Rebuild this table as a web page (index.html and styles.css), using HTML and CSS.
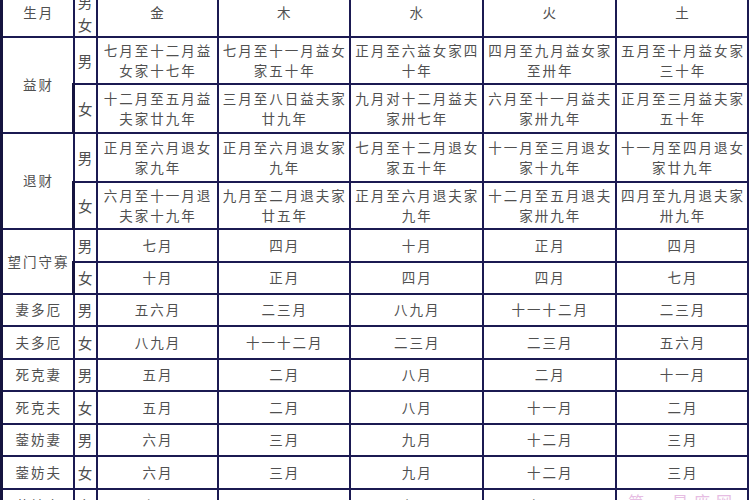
FILE: index.html
```html
<!DOCTYPE html>
<html lang="zh">
<head>
<meta charset="utf-8">
<link rel="stylesheet" href="styles.css">
</head>
<body>
<table class="chart">
  <colgroup>
    <col class="c-name"><col class="c-sex"><col class="c-el1"><col class="c-el2"><col class="c-el3"><col class="c-el4"><col class="c-el5">
  </colgroup>
  <tr class="r-head">
    <td>生月</td><td class="sex-head">男<br>女</td><td>金</td><td>木</td><td>水</td><td>火</td><td>土</td>
  </tr>
  <tr class="r-a">
    <td rowspan="2">益财</td><td class="sex">男</td>
    <td>七月至十二月益<br>女家十七年</td><td>七月至十一月益女<br>家五十年</td><td>正月至六益女家四<br>十年</td><td>四月至九月益女家<br>至卅年</td><td>五月至十月益女家<br>三十年</td>
  </tr>
  <tr class="r-b">
    <td class="sex">女</td>
    <td>十二月至五月益<br>夫家廿九年</td><td>三月至八日益夫家<br>廿九年</td><td>九月对十二月益夫<br>家卅七年</td><td>六月至十一月益夫<br>家卅九年</td><td>正月至三月益夫家<br>五十年</td>
  </tr>
  <tr class="r-b">
    <td rowspan="2">退财</td><td class="sex">男</td>
    <td>正月至六月退女<br>家九年</td><td>正月至六月退女家<br>九年</td><td>七月至十二月退女<br>家五十年</td><td>十一月至三月退女<br>家十九年</td><td>十一月至四月退女<br>家廿九年</td>
  </tr>
  <tr class="r-c">
    <td class="sex">女</td>
    <td>六月至十一月退<br>夫家十九年</td><td>九月至二月退夫家<br>廿五年</td><td>正月至六月退夫家<br>九年</td><td>十二月至五月退夫<br>家卅九年</td><td>四月至九月退夫家<br>卅九年</td>
  </tr>
  <tr class="r-s1">
    <td rowspan="2">望门守寡</td><td class="sex">男</td>
    <td>七月</td><td>四月</td><td>十月</td><td>正月</td><td>四月</td>
  </tr>
  <tr class="r-s2">
    <td class="sex">女</td>
    <td>十月</td><td>正月</td><td>四月</td><td>四月</td><td>七月</td>
  </tr>
  <tr class="r-s2">
    <td>妻多厄</td><td class="sex">男</td>
    <td>五六月</td><td>二三月</td><td>八九月</td><td>十一十二月</td><td>二三月</td>
  </tr>
  <tr class="r-s1">
    <td>夫多厄</td><td class="sex">女</td>
    <td>八九月</td><td>十一十二月</td><td>二三月</td><td>二三月</td><td>五六月</td>
  </tr>
  <tr class="r-s2">
    <td>死克妻</td><td class="sex">男</td>
    <td>五月</td><td>二月</td><td>八月</td><td>二月</td><td>十一月</td>
  </tr>
  <tr class="r-s1">
    <td>死克夫</td><td class="sex">女</td>
    <td>五月</td><td>二月</td><td>八月</td><td>十一月</td><td>二月</td>
  </tr>
  <tr class="r-s2">
    <td>蓥妨妻</td><td class="sex">男</td>
    <td>六月</td><td>三月</td><td>九月</td><td>十二月</td><td>三月</td>
  </tr>
  <tr class="r-s1">
    <td>蓥妨夫</td><td class="sex">女</td>
    <td>六月</td><td>三月</td><td>九月</td><td>十二月</td><td>三月</td>
  </tr>
  <tr class="r-s1">
    <td>蓥妨女</td><td class="sex">女</td>
    <td>六月</td><td>三月</td><td>九月</td><td>十二月</td><td><span class="mark">第一星座网</span></td>
  </tr>
</table>
</body>
</html>
```

FILE: styles.css
```css
html, body {
  margin: 0;
  padding: 0;
  background: #ffffff;
  overflow: hidden;
}

.chart {
  margin-top: -13px;
  width: 749px;
  table-layout: fixed;
  border-collapse: collapse;
  border-left: 3px solid #15143f;
  font-family: "Noto Sans CJK SC", "Noto Sans", sans-serif;
  font-size: 13.5px;
  letter-spacing: 2px;
  line-height: 19.5px;
  color: #505050;
  text-align: center;
}

.chart td {
  border: 2px solid #1b1a52;
  padding: 0 0 0 2px;
  vertical-align: middle;
  white-space: nowrap;
  overflow: hidden;
}

.chart tr td:first-child {
  border-left-width: 3px;
  border-left-color: #15143f;
}

.chart td.sex,
.chart td.sex-head {
  padding: 0;
  letter-spacing: 0;
  font-size: 14.5px;
}

.c-name { width: 72px; }
.c-sex { width: 23px; }
.c-el1 { width: 121px; }
.c-el2 { width: 132px; }
.c-el3 { width: 133px; }
.c-el4 { width: 133px; }
.c-el5 { width: 132px; }

.r-head { height: 49px; }
.r-a { height: 47px; }
.r-b { height: 49px; }
.r-c { height: 47px; }
.r-s1 { height: 33px; }
.r-s2 { height: 32px; }

.chart td.sex-head {
  line-height: 23px;
}

.mark {
  display: inline-block;
  position: relative;
  top: -3px;
  color: #e6bde3;
  letter-spacing: 6px;
  font-size: 16px;
}
```
